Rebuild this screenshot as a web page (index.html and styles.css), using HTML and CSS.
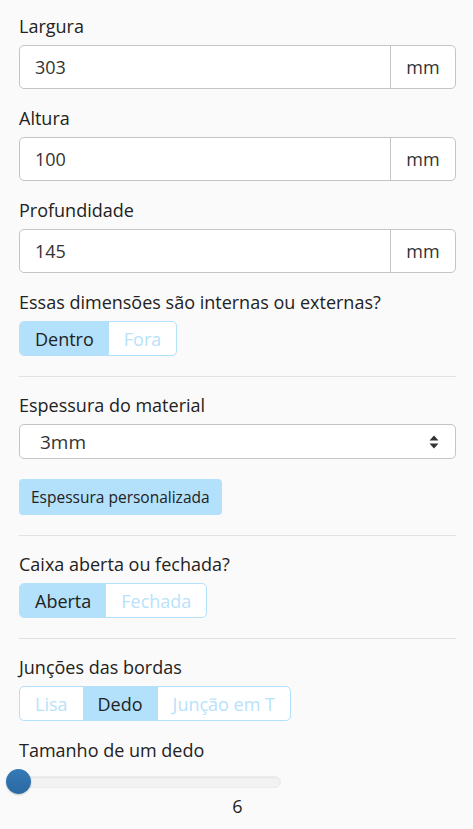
FILE: index.html
```html
<!DOCTYPE html>
<html lang="pt">
<head>
<meta charset="utf-8">
<title>Caixa</title>
<link rel="stylesheet" href="styles.css">
</head>
<body>
<div class="panel">
  <div class="field">
    <label class="label">Largura</label>
    <div class="input-group">
      <div class="input">303</div>
      <div class="addon">mm</div>
    </div>
  </div>
  <div class="field">
    <label class="label">Altura</label>
    <div class="input-group">
      <div class="input">100</div>
      <div class="addon">mm</div>
    </div>
  </div>
  <div class="field">
    <label class="label">Profundidade</label>
    <div class="input-group">
      <div class="input">145</div>
      <div class="addon">mm</div>
    </div>
  </div>
  <div class="field last">
    <label class="label">Essas dimensões são internas ou externas?</label>
    <div class="btn-group">
      <span class="seg active">Dentro</span>
      <span class="seg">Fora</span>
    </div>
  </div>

  <hr class="divider">

  <div class="field last">
    <label class="label">Espessura do material</label>
    <div class="select">
      <span class="select-text">3mm</span>
      <svg class="caret" width="10" height="14" viewBox="0 0 10 14"><path d="M5 0.5 L9.5 5.5 H0.5 Z M5 13.5 L9.5 8.5 H0.5 Z" fill="#333"/></svg>
    </div>
    <button class="btn">Espessura personalizada</button>
  </div>

  <hr class="divider">

  <div class="field last">
    <label class="label">Caixa aberta ou fechada?</label>
    <div class="btn-group">
      <span class="seg active">Aberta</span>
      <span class="seg">Fechada</span>
    </div>
  </div>

  <hr class="divider">

  <div class="field">
    <label class="label">Junções das bordas</label>
    <div class="btn-group">
      <span class="seg">Lisa</span>
      <span class="seg active">Dedo</span>
      <span class="seg">Junção em T</span>
    </div>
  </div>

  <div class="field last">
    <label class="label">Tamanho de um dedo</label>
    <div class="slider">
      <div class="track"></div>
      <div class="thumb"></div>
    </div>
    <div class="slider-value">6</div>
  </div>
</div>
</body>
</html>
```

FILE: styles.css
```css
html, body {
  margin: 0;
  padding: 0;
  background: #fafafa;
}
body {
  font-family: "Open Sans", "Liberation Sans", sans-serif;
  color: #222;
  font-size: 18px;
}
.panel {
  padding: 14px 17px 0 19px;
}
.field {
  margin-bottom: 17px;
}
.field.last {
  margin-bottom: 0;
}
.label {
  display: block;
  line-height: 24px;
  margin-bottom: 7px;
}
.input-group {
  display: flex;
  height: 44px;
  border: 1px solid #c4c4c4;
  border-radius: 5px;
  background: #fff;
  box-sizing: border-box;
}
.input {
  flex: 1;
  display: flex;
  align-items: center;
  padding-left: 15px;
  color: #333;
}
.addon {
  width: 64px;
  border-left: 1px solid #c4c4c4;
  display: flex;
  align-items: center;
  justify-content: center;
  color: #333;
}
.btn-group {
  display: inline-flex;
  height: 35px;
  border: 1px solid #b3e0fa;
  border-radius: 5px;
  overflow: hidden;
  box-sizing: border-box;
  background: #fff;
}
.seg {
  display: flex;
  align-items: center;
  padding: 0 15px;
  color: #b8e2fa;
}
.seg.active {
  background: #b3e0fa;
  color: #222;
}
.divider {
  border: 0;
  border-top: 1px solid #e2e2e2;
  margin: 20px 0 16px;
}
.select {
  height: 35px;
  box-sizing: border-box;
  border: 1px solid #c4c4c4;
  border-radius: 5px;
  background: #fff;
  display: flex;
  align-items: center;
  justify-content: space-between;
  padding: 0 16px 0 20px;
}
.select-text {
  font-size: 19px;
  color: #333;
}
.btn {
  display: block;
  margin-top: 20px;
  height: 36px;
  padding: 0 12px;
  border: 0;
  border-radius: 4px;
  background: #b3e0fa;
  font-family: "Open Sans", "Liberation Sans", sans-serif;
  font-size: 15.5px;
  color: #222;
}
.slider {
  position: relative;
  width: 262px;
  height: 25px;
  margin-top: 5px;
  display: flex;
  align-items: center;
}
.track {
  width: 100%;
  height: 12px;
  box-sizing: border-box;
  border-radius: 6px;
  background: #f2f2f2;
  border: 1px solid #ececec;
  box-shadow: inset 0 1px 2px rgba(0,0,0,0.05);
}
.thumb {
  position: absolute;
  left: -13px;
  top: 0;
  width: 25px;
  height: 25px;
  border-radius: 50%;
  background: linear-gradient(#3479b6, #2c6aa2);
  box-shadow: 0 1px 2px rgba(0,0,0,0.2);
}
.slider-value {
  text-align: center;
  line-height: 24px;
}
```
